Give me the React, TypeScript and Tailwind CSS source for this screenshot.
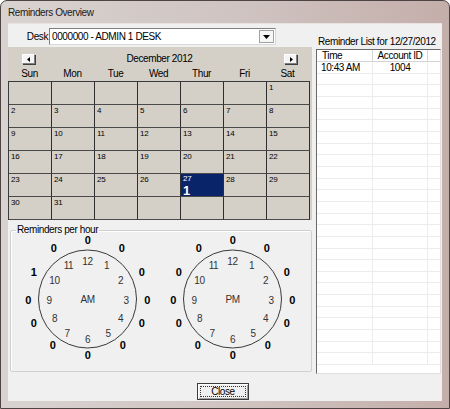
import React from "react";

const days: (number | null)[] = [
  null, null, null, null, null, null, 1,
  2, 3, 4, 5, 6, 7, 8,
  9, 10, 11, 12, 13, 14, 15,
  16, 17, 18, 19, 20, 21, 22,
  23, 24, 25, 26, 27, 28, 29,
  30, 31, null, null, null, null, null,
];

const dayNames = ["Sun", "Mon", "Tue", "Wed", "Thur", "Fri", "Sat"];

const inner: [number, number, number][] = [
  [12, 0, -38], [1, 19, -33.5], [2, 33, -19], [3, 38.5, 1], [4, 33, 19.5], [5, 20.5, 34],
  [6, 0, 40], [7, -20.5, 34], [8, -33, 19.5], [9, -38.5, 1], [10, -33, -19], [11, -19, -33.5],
];

const outer: [number, number, number][] = [
  [12, 0, -59.3], [1, 34, -51], [2, 54, -27], [3, 59.5, 1], [4, 54, 24], [5, 35, 46.3],
  [6, 0, 56.3], [7, -35, 46.3], [8, -54, 24], [9, -59.5, 1], [10, -54, -27], [11, -34, -51],
];

function Clock({ label, counts }: { label: string; counts: Record<number, number> }) {
  const cx = 72.5;
  const cy = 64;
  return (
    <svg width="145" height="130" viewBox="0 0 145 130" className="block shrink-0">
      <circle cx={cx} cy={cy} r={49} fill="none" stroke="#3a3a3a" strokeWidth={1} />
      {inner.map(([h, dx, dy]) => (
        <text
          key={"i" + h}
          x={cx + dx}
          y={cy + dy}
          textAnchor="middle"
          dominantBaseline="central"
          fontSize={10}
          fill="#333333"
          fontFamily="'Liberation Sans', Arial, sans-serif"
        >
          {h}
        </text>
      ))}
      {outer.map(([h, dx, dy]) => (
        <text
          key={"o" + h}
          x={cx + dx}
          y={cy + dy}
          textAnchor="middle"
          dominantBaseline="central"
          fontSize={11}
          fontWeight="bold"
          fill="#000"
          fontFamily="'Liberation Sans', Arial, sans-serif"
        >
          {counts[h] ?? 0}
        </text>
      ))}
      <text
        x={cx}
        y={cy}
        textAnchor="middle"
        dominantBaseline="central"
        fontSize={10}
        fill="#333333"
        fontFamily="'Liberation Sans', Arial, sans-serif"
      >
        {label}
      </text>
    </svg>
  );
}

function ArrowBtn({ dir }: { dir: "left" | "right" }) {
  return (
    <div className="w-[13px] h-[10px] flex items-center justify-center bg-[#f4f4f4] border border-t-white border-l-white border-r-[#808080] border-b-[#808080] shadow-[1px_1px_0_#404040]">
      <svg width="4" height="5" viewBox="0 0 4 5">
        {dir === "left" ? <polygon points="3,0 3,5 0,2.5" fill="#000" /> : <polygon points="1,0 1,5 4,2.5" fill="#000" />}
      </svg>
    </div>
  );
}

export default function App() {
  const rows = Array.from({ length: 26 });
  return (
    <div className="w-[450px] h-[409px] overflow-hidden bg-white font-['Liberation_Sans',Arial,sans-serif] tracking-[-0.4px] text-[10px] text-black">
      <div className="w-full h-full rounded-t-[7px] border border-[#4e4444] bg-[linear-gradient(90deg,#d8d3d1_0%,#cfc3c0_55%,#c4aeaa_100%)] flex flex-col">
        {/* title bar */}
        <div className="h-[22px] shrink-0 flex items-center pl-[7px] pt-[1px]">
          <span className="text-[10px] text-[#1a1a1a]">Reminders Overview</span>
        </div>
        {/* client */}
        <div className="mx-[7px] mb-[7px] flex-1 flex flex-col bg-[#f0f0f0] border-t border-t-[#e8e2e0]">
          <div className="flex">
            {/* left column */}
            <div className="w-[304px] shrink-0 flex flex-col">
              {/* desk row */}
              <div className="mt-[4px] h-[17px] flex items-center">
                <div className="w-[41px] text-right pr-[1px]">Desk</div>
                <div className="w-[227px] h-[17px] bg-white border border-t-[#808080] border-l-[#808080] border-r-[#d8d8d8] border-b-[#d8d8d8] flex items-center">
                  <span className="flex-1 pl-[2px] leading-none">0000000 - ADMIN 1 DESK</span>
                  <div className="w-[15px] h-[13px] mr-[1px] flex items-center justify-center bg-[#f6f6f6] border border-[#a0a0a0]">
                    <svg width="7" height="4" viewBox="0 0 7 4">
                      <polygon points="0,0 7,0 3.5,4" fill="#000" />
                    </svg>
                  </div>
                </div>
              </div>
              {/* calendar */}
              <div className="mt-[2px] bg-[#d4d0c8] flex flex-col">
                <div className="pt-[7px] pl-[14px] pr-[15px] flex items-center h-[10px] box-content">
                  <ArrowBtn dir="left" />
                  <div className="flex-1 text-center leading-[10px]">December 2012</div>
                  <ArrowBtn dir="right" />
                </div>
                <div className="h-[17px] flex items-end pb-[1px]">
                  {dayNames.map((d) => (
                    <div key={d} className="w-[43px] text-center leading-[12px]">
                      {d}
                    </div>
                  ))}
                </div>
                <div className="w-[302px] grid grid-cols-[repeat(7,43px)] border-t border-l border-[#3a3a3a]">
                  {days.map((d, i) => {
                    const sel = d === 27;
                    return (
                      <div
                        key={i}
                        className={
                          "h-[23px] border-r border-b border-r-[#2e2e2e] border-b-[#4a4a4a] " +
                          (sel ? "bg-[#0a246a] text-white" : "")
                        }
                      >
                        {d !== null && (
                          <div
                            className={
                              "pl-[2px] text-[8px] leading-[7px] tracking-[-0.3px] " + (sel ? "pt-[1px]" : "pt-[2px]")
                            }
                          >
                            {d}
                          </div>
                        )}
                        {sel && <div className="pl-[2px] mt-[3px] text-[13px] font-bold leading-[11px]">1</div>}
                      </div>
                    );
                  })}
                </div>
              </div>
              {/* group box */}
              <fieldset className="mt-[4px] ml-[2px] h-[148px] border border-[#cfcfcf] rounded-[2px] shadow-[inset_1px_1px_0_#fff]">
                <legend className="ml-[5px] px-[1px] leading-[12px]">Reminders per hour</legend>
                <div className="flex pl-[4px] -mt-[1px]">
                  <Clock label="AM" counts={{ 10: 1 }} />
                  <Clock label="PM" counts={{}} />
                </div>
              </fieldset>
            </div>
            {/* right column */}
            <div className="ml-[4px] w-[125px] flex flex-col">
              <div className="mt-[12px] h-[12px] leading-[12px] pl-[2px]">Reminder List for 12/27/2012</div>
              <div className="mt-[1px] h-[325px] bg-white border border-t-[#696969] border-l-[#696969] border-r-[#e0e0e0] border-b-[#e0e0e0] overflow-hidden">
                <div className="h-[12px] flex border-b border-[#d5d5d5] leading-[11px]">
                  <div className="w-[56px] pl-[5px] border-r border-[#d5d5d5]">Time</div>
                  <div className="w-[55px] text-center border-r border-[#d5d5d5]">Account ID</div>
                  <div className="flex-1" />
                </div>
                {rows.map((_, i) => (
                  <div key={i} className="h-[11.67px] flex border-b border-[#ececec] leading-[11px]">
                    <div className="w-[56px] pl-[4px] border-r border-[#ececec]">{i === 0 ? "10:43  AM" : ""}</div>
                    <div className="w-[55px] text-center border-r border-[#ececec]">{i === 0 ? "1004" : ""}</div>
                    <div className="flex-1" />
                  </div>
                ))}
              </div>
            </div>
          </div>
          {/* bottom */}
          <div className="flex justify-center pr-[4px] mt-[9px]">
            <div className="w-[52px] h-[17px] p-[2px] bg-[#f0f0f0] border border-[#3c3c3c] shadow-[inset_1px_1px_0_#fff,inset_-1px_-1px_0_#a0a0a0]">
              <div className="w-full h-full border border-dotted border-[#333] flex items-center justify-center leading-none">
                Close
              </div>
            </div>
          </div>
        </div>
      </div>
    </div>
  );
}
